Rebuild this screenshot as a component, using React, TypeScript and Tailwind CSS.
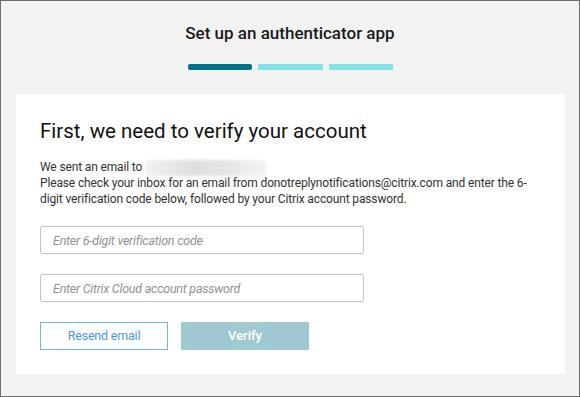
import React from "react";

export default function App() {
  return (
    <div
      className="w-[580px] h-[397px] border border-[#6e6e6e] bg-[#f2f2f2] flex flex-col items-center"
      style={{ fontFamily: "Roboto, 'Noto Sans', sans-serif" }}
    >
      <h1 className="mt-[20px] text-[17px] leading-[24px] text-[#1a1a1a] font-medium">
        Set up an authenticator app
      </h1>
      <div className="mt-[19px] flex gap-[6px] h-[6px]">
        <div className="w-[64px] h-full rounded-[2px] bg-[#02748a]" />
        <div className="w-[65px] h-full bg-[#84e2e5]" />
        <div className="w-[64px] h-full bg-[#84e2e5]" />
      </div>
      <div className="mt-[24px] self-start ml-[15px] w-[549px] h-[280px] bg-white pl-[24px] pt-[23px]">
        <h2 className="text-[20.5px] leading-[28px] text-[#111] font-normal">
          First, we need to verify your account
        </h2>
        <div className="mt-[15px] text-[12px] leading-[15.5px] text-[#333] tracking-[-0.14px] w-[500px]">
          <div className="flex items-center">
            <span>We sent an email to</span>
            <span className="ml-[3px] inline-block w-[122px] h-[16px] rounded-[6px] bg-[linear-gradient(90deg,#f2f2f2,#dedede_40%,#e6e6e6_70%,#f5f5f5)] blur-[1.5px]" />
          </div>
          <p>
            Please check your inbox for an email from donotreplynotifications@citrix.com and enter the 6-
            digit verification code below, followed by your Citrix account password.
          </p>
        </div>
        <input
          className="mt-[19px] block w-[324px] h-[28px] border border-[#c4c4c4] rounded-[2px] px-[12px] text-[12.5px] tracking-[-0.25px] italic placeholder:text-[#929292] outline-none"
          placeholder="Enter 6-digit verification code"
        />
        <input
          className="mt-[20px] block w-[324px] h-[28px] border border-[#c4c4c4] rounded-[2px] px-[12px] text-[12.5px] tracking-[-0.25px] italic placeholder:text-[#929292] outline-none"
          placeholder="Enter Citrix Cloud account password"
        />
        <div className="mt-[20px] flex gap-[13px]">
          <button className="w-[128px] h-[28px] border border-[#6cb8ec] text-[#4d97dd] text-[12.5px] tracking-[-0.2px] bg-white">
            Resend email
          </button>
          <button className="w-[128px] h-[28px] bg-[#9ec9d0] text-white text-[13px] font-medium">
            Verify
          </button>
        </div>
      </div>
    </div>
  );
}
